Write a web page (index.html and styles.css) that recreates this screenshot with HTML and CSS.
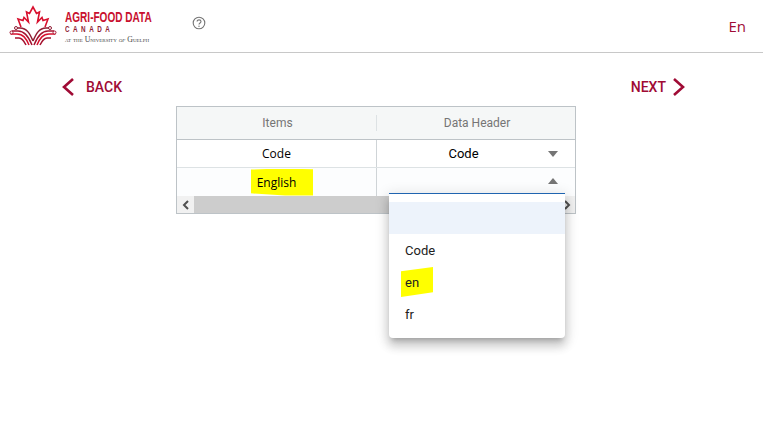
FILE: index.html
```html
<!DOCTYPE html>
<html lang="en">
<head>
  <meta charset="UTF-8">
  <title>Agri-Food Data Canada</title>
  <link rel="stylesheet" href="styles.css">
</head>
<body>
  <header class="topbar">
    <div class="brand">
      <svg class="leaf" width="48" height="44" viewBox="0 0 48 44" fill="none">
        <path d="M12 23 L9 15 L14 16.5 L15 13.5 L19.5 18 L17.5 8 L20.5 9.5 L24 3 L27.5 9.5 L30.5 8 L28.5 18 L33 13.5 L34 16.5 L39 15 L36 23" stroke="#d8102e" stroke-width="1.6" stroke-linejoin="miter"/>
        <path d="M3 27 H9 C15 27 19 31 23 41" stroke="#a5122f" stroke-width="1.5"/>
        <path d="M1.5 30 H8 C14 30 17 34 20 41" stroke="#d8102e" stroke-width="1.5"/>
        <path d="M7 24 H11 C18 24 21 30 24 37" stroke="#8f1d33" stroke-width="1.5"/>
        <path d="M6 34 H10 C13 34 15 37 17 41" stroke="#a5122f" stroke-width="1.5"/>
        <path d="M45 27 H39 C33 27 29 31 25 41" stroke="#a5122f" stroke-width="1.5"/>
        <path d="M46.500 30 H40 C34 30 31 34 28 41" stroke="#d8102e" stroke-width="1.5"/>
        <path d="M41 24 H37 C30 24 27 30 24 37" stroke="#8f1d33" stroke-width="1.5"/>
        <path d="M42 34 H38 C35 34 33 37 31 41" stroke="#a5122f" stroke-width="1.5"/>
        <circle cx="2.500" cy="28.500" r="1.500" fill="#fff" stroke="#a5122f"/>
        <circle cx="7" cy="24" r="1.500" fill="#fff" stroke="#8f1d33"/>
        <circle cx="45.500" cy="28.500" r="1.500" fill="#fff" stroke="#a5122f"/>
        <circle cx="41" cy="24" r="1.500" fill="#fff" stroke="#8f1d33"/>
      </svg>
      <div class="wordmark">
        <div class="wordmark-title">AGRI-FOOD DATA</div>
        <div class="wordmark-country">CANADA</div>
        <div class="wordmark-uni">at the University <i>of</i> Guelph</div>
      </div>
    </div>
    <svg class="help" width="14" height="14" viewBox="0 0 14 14" fill="none">
      <circle cx="7" cy="7" r="5.800" stroke="#757575" stroke-width="1.100"/>
      <path d="M5.100 5.600 C5.100 3.200 9 3.300 9 5.500 C9 7 7 6.900 7 8.500" stroke="#757575" stroke-width="1.100"/>
      <circle cx="7" cy="10.200" r="0.700" fill="#757575"/>
    </svg>
    <div class="lang">En</div>
  </header>

  <nav class="steps">
    <a class="step">
      <svg width="14" height="20" viewBox="0 0 14 20" fill="none"><path d="M12 2 L3 10 L12 18" stroke="#a00b35" stroke-width="2.600"/></svg>
      <span class="step-back">BACK</span>
    </a>
    <a class="step">
      <span>NEXT</span>
      <svg width="14" height="20" viewBox="0 0 14 20" fill="none"><path d="M2 2 L11 10 L2 18" stroke="#a00b35" stroke-width="2.600"/></svg>
    </a>
  </nav>

  <main class="table-wrap">
    <div class="grid">
      <div class="grid-head">
        <div class="head-cell"><span>Items</span></div>
        <div class="head-cell"><span>Data Header</span></div>
      </div>
      <div class="grid-row">
        <div class="cell">Code</div>
        <div class="cell cell-select"><span>Code</span><i class="caret"></i></div>
      </div>
      <div class="grid-row grid-row-alt">
        <div class="cell"><mark class="mark-english">English</mark></div>
        <div class="cell cell-select"><i class="caret caret-up"></i></div>
      </div>
      <div class="scrollbar">
        <div class="scroll-btn">
          <svg width="8" height="10" viewBox="0 0 8 10" fill="none"><path d="M6 1 L2 5 L6 9" stroke="#505050" stroke-width="2"/></svg>
        </div>
        <div class="scroll-track"></div>
        <div class="scroll-btn">
          <svg width="8" height="10" viewBox="0 0 8 10" fill="none"><path d="M2 1 L6 5 L2 9" stroke="#505050" stroke-width="2"/></svg>
        </div>
      </div>
    </div>

    <div class="menu">
      <div class="option option-active"></div>
      <div class="option">Code</div>
      <div class="option"><mark class="mark-en">en</mark></div>
      <div class="option">fr</div>
    </div>
  </main>
</body>
</html>
```

FILE: styles.css
```css
html, body {
  margin: 0;
  padding: 0;
}

body {
  background: #fff;
  font-family: Roboto, "Liberation Sans", sans-serif;
  color: #000;
  height: 428px;
  overflow: hidden;
}

.topbar {
  display: flex;
  align-items: flex-start;
  height: 52px;
  border-bottom: 1px solid #c8c8c8;
}

.brand {
  display: flex;
  margin: 4px 0 0 9px;
  width: 144px;
}

.leaf {
  flex: none;
}

.wordmark {
  margin: 5px 0 0 8px;
  white-space: nowrap;
}

.wordmark-title {
  font-family: "Liberation Sans", sans-serif;
  font-size: 15px;
  line-height: 15px;
  font-weight: 700;
  color: #c8102e;
  transform: scaleX(0.67);
  transform-origin: left;
  width: 90px;
}

.wordmark-country {
  font-family: "Liberation Sans", sans-serif;
  font-size: 9px;
  line-height: 9px;
  margin-top: 1px;
  font-weight: 700;
  letter-spacing: 5px;
  color: #8f1d33;
  transform: scaleX(0.7);
  transform-origin: left;
}

.wordmark-uni {
  font-family: "Liberation Serif", serif;
  font-variant: small-caps;
  font-size: 7.800px;
  line-height: 7px;
  margin-top: 2px;
  color: #444;
}

.help {
  margin: 16px 0 0 39px;
}

.lang {
  margin: 16px 17px 0 auto;
  font-family: "Open Sans", sans-serif;
  font-size: 15px;
  line-height: 20px;
  color: #a00b35;
}

.steps {
  display: flex;
  justify-content: space-between;
  padding: 24px 77px 0 61px;
}

.step {
  display: flex;
  align-items: center;
  gap: 11px;
  height: 20px;
  font-size: 14px;
  font-weight: 500;
  color: #a00b35;
}

.step:last-child {
  gap: 6px;
}

.table-wrap {
  position: relative;
  width: 400px;
  margin: 9px 0 0 176px;
}

.grid {
  border: 1px solid #bdc3c7;
  font-size: 13px;
}

.grid-head,
.grid-row {
  display: grid;
  grid-template-columns: 200px 198px;
}

.grid-head {
  height: 32px;
  background: #f5f7f7;
  border-bottom: 1px solid #bdc3c7;
  color: #757575;
  font-size: 12px;
}

.head-cell {
  display: flex;
  align-items: center;
  justify-content: center;
  padding-left: 2px;
}

.head-cell:first-child {
  position: relative;
  border-right: 1px solid #dde2e4;
  height: 16px;
  align-self: center;
}

.grid-row {
  height: 27px;
  border-bottom: 1px solid #dde2e4;
}

.grid-row-alt {
  height: 28px;
  background: #fcfdfe;
  border-bottom: 0;
}

.cell {
  display: flex;
  align-items: center;
  justify-content: center;
  font-family: "Open Sans", sans-serif;
  font-size: 12px;
}

.cell:first-child {
  border-right: 1px solid #cfd4d7;
}

.cell-select {
  position: relative;
  font-family: Roboto, sans-serif;
  font-size: 13px;
  padding-right: 25px;
  box-sizing: border-box;
}

.caret {
  position: absolute;
  right: 17px;
  top: 11px;
  width: 0;
  height: 0;
  border-left: 5.500px solid transparent;
  border-right: 5.500px solid transparent;
  border-top: 6px solid #757575;
}

.cell-select .caret-up {
  top: 10px;
  border-top: 0;
  border-bottom: 6px solid #757575;
}

mark {
  display: flex;
  align-items: center;
  background: #ffff00;
  color: inherit;
}

.mark-english {
  height: 27px;
  padding: 0 17px 0 6px;
  margin: 0 -17px 0 -6px;
  clip-path: polygon(0 4%, 45% 0, 100% 3%, 100% 100%, 55% 100%, 0 92%);
}

.mark-en {
  height: 30px;
  width: 32px;
  margin-left: -4px;
  padding-left: 4px;
  box-sizing: border-box;
  clip-path: polygon(0 14%, 100% 0, 100% 84%, 0 100%);
}

.scrollbar {
  display: flex;
  height: 17px;
  background: #f1f1f1;
}

.scroll-btn {
  display: flex;
  align-items: center;
  justify-content: center;
  width: 17px;
}

.scroll-track {
  flex: 1;
  background: #cdcdcd;
}

.menu {
  position: absolute;
  left: 213px;
  top: 87px;
  width: 176px;
  padding: 8px 0;
  box-sizing: border-box;
  height: 145px;
  background: #fff;
  border-top: 1px solid #1f64b0;
  border-radius: 0 0 4px 4px;
  box-shadow: 0 5px 5px -3px rgba(0,0,0,0.2), 0 8px 10px 1px rgba(0,0,0,0.14), 0 3px 14px 2px rgba(0,0,0,0.12);
  font-size: 13px;
  color: #212121;
}

.option {
  display: flex;
  align-items: center;
  height: 32px;
  padding-left: 16px;
}

.option-active {
  background: #edf3fb;
}
```
